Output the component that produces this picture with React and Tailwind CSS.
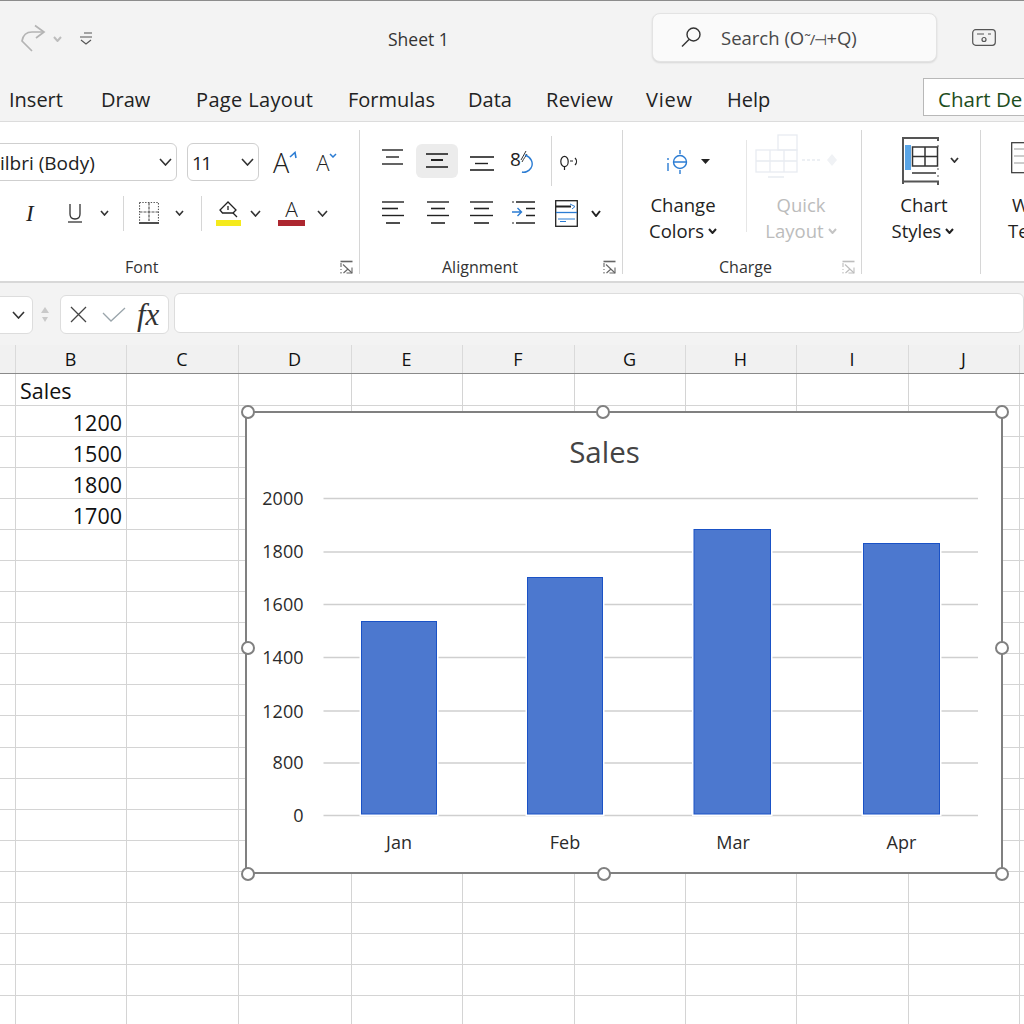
const Chev = ({ w = 10, h = 6, c = "#333", sw = 1.6, className = "" }) => (
  <svg width={w} height={h} viewBox={`0 0 ${w} ${h}`} className={`shrink-0 ${className}`} fill="none" stroke={c} strokeWidth={sw}>
    <path d={`M1 1L${w / 2} ${h - 1}L${w - 1} 1`} />
  </svg>
);

const Lines = ({ w, h = 34, lines, c = "#222" }) => (
  <svg width={w} height={h} viewBox={`0 0 ${w} ${h}`} className="shrink-0" fill="none">
    {lines.map(([x1, x2, y, sw = 1.4, col = c], i) => (
      <line key={i} x1={x1} x2={x2} y1={y} y2={y} stroke={col} strokeWidth={sw} />
    ))}
  </svg>
);

const Launcher = ({ c = "#666", className }) => (
  <svg width="13" height="14" viewBox="0 0 13 14" fill="none" stroke={c} strokeWidth="1.1" className={className}>
    <path d="M0.5 1.5H12.5" strokeWidth="1.6" />
    <path d="M1 3V7M1 9V10M1 12V13.5" />
    <path d="M3 4.5L12 13" />
    <path d="M12 7.5V13H6.5" />
    <path d="M3.5 13L8 9" />
  </svg>
);

const Vr = ({ className = "" }) => <div className={`w-px shrink-0 bg-[#d6d6d6] ${className}`} />;

const Tab = ({ className, children }) => (
  <div className={`flex h-full shrink-0 items-center pt-[6px] text-[20px] text-[#222] ${className}`}>{children}</div>
);

const columns = [
  { w: "w-[16px]", t: "" },
  { w: "w-[111px]", t: "B" },
  { w: "w-[112px]", t: "C" },
  { w: "w-[113px]", t: "D" },
  { w: "w-[111px]", t: "E" },
  { w: "w-[112px]", t: "F" },
  { w: "w-[111px]", t: "G" },
  { w: "w-[111px]", t: "H" },
  { w: "w-[112px]", t: "I" },
  { w: "w-[111px]", t: "J" },
  { w: "w-[24px]", t: "" },
];

const rows = [
  { left: "Sales", h: "h-[32px]" },
  { right: "1200" },
  { right: "1500" },
  { right: "1800" },
  { right: "1700" },
  ...Array.from({ length: 16 }, () => ({})),
];

const gridYs = [
  [498.5, "2000", 505],
  [552, "1800", 558],
  [604.5, "1600", 611],
  [657.5, "1400", 664],
  [711, "1200", 717.5],
  [763, "800", 769],
  [815.5, "0", 822],
];

const bars = [
  { x: 361.5, w: 75, y: 621.5, label: "Jan", cx: 399 },
  { x: 527.5, w: 75, y: 577.5, label: "Feb", cx: 565 },
  { x: 694, w: 76.5, y: 529.5, label: "Mar", cx: 733 },
  { x: 863.5, w: 76, y: 543.5, label: "Apr", cx: 901.5 },
];

const handle = "absolute h-[14px] w-[14px] rounded-full border-2 border-[#808080] bg-white";

export default function App() {
  return (
    <div className="relative h-[1024px] w-[1024px] overflow-hidden bg-white font-['Open_Sans',sans-serif] text-[#222]">
      {/* Title bar */}
      <div className="flex h-[72px] items-center border-t border-[#8c8c8c] bg-[#f3f3f3] pt-[2px]">
        <svg width="26" height="28" viewBox="0 0 26 28" fill="none" stroke="#b4b4b4" strokeWidth="1.7" className="ml-[20px] shrink-0">
          <path d="M15 1.5L24 8L16 14" />
          <path d="M24 8H12C6 8 3 11 2 17L12 27" />
        </svg>
        <Chev w={9} h={6} c="#bdbdbd" sw={2} className="ml-[7px] mt-[2px]" />
        <svg width="14" height="14" viewBox="0 0 14 14" fill="none" stroke="#555" strokeWidth="1.2" className="ml-[17px] shrink-0">
          <path d="M5 2H13M1 6H13M2 9L7 13L12 9" />
        </svg>
        <div className="ml-[295px] w-[264px] shrink-0 pt-[3px] text-[17.5px] text-[#333]">Sheet 1</div>
        <div className="flex h-[49px] w-[285px] shrink-0 items-center rounded-lg border border-[#e3e3e3] bg-[#fafafa] shadow-[0_1px_2px_rgba(0,0,0,0.12)]">
          <svg width="22" height="24" viewBox="0 0 22 24" fill="none" stroke="#333" strokeWidth="1.4" className="ml-[27px] shrink-0">
            <circle cx="13.5" cy="8.5" r="6.5" />
            <path d="M9 13.5L2 20.5" />
          </svg>
          <span className="ml-[19px] whitespace-nowrap text-[18.5px] text-[#484848]">
            Search (O<span className="text-[15px] tracking-[-1px]">˜/⊣</span>+Q)
          </span>
        </div>
        <svg width="24" height="17" viewBox="0 0 24 17" fill="none" stroke="#555" strokeWidth="1.2" className="ml-[35px] shrink-0">
          <rect x="0.7" y="0.7" width="22.6" height="15.6" rx="3" />
          <path d="M5 5H12M16 5H19" />
          <circle cx="12" cy="10.5" r="2" />
        </svg>
      </div>

      {/* Tabs */}
      <div className="flex h-[50px] border-b border-[#dcdcdc] bg-[#f3f3f3]">
        <Tab className="w-[101px] pl-[9px]">Insert</Tab>
        <Tab className="w-[95px]">Draw</Tab>
        <Tab className="w-[152px] tracking-[0.35px]">Page Layout</Tab>
        <Tab className="w-[120px]">Formulas</Tab>
        <Tab className="w-[78px]">Data</Tab>
        <Tab className="w-[100px] tracking-[0.3px]">Review</Tab>
        <Tab className="w-[81px] tracking-[0.8px]">View</Tab>
        <Tab className="w-[196px]">Help</Tab>
        <div className="mt-[6px] flex h-[38px] flex-1 items-center overflow-hidden whitespace-nowrap border border-r-0 border-[#b8b8b8] bg-white pl-[14px] pt-[5px] text-[20.5px] text-[#1d4d1d]">
          Chart De
        </div>
      </div>

      {/* Ribbon */}
      <div className="flex h-[161px] overflow-hidden border-b-2 border-[#d8d8d8] bg-white">
        {/* Font */}
        <div className="relative flex w-[359px] shrink-0 flex-col">
          <div className="mt-[21px] flex h-[38px] items-center">
            <div className="-ml-[30px] flex h-[38px] w-[207px] shrink-0 items-center rounded-md border border-[#cfcfcf] pl-[29px] pt-[3px] text-[19px]">
              <span>ilbri (Body)</span>
              <Chev w={13} h={8} c="#333" className="ml-auto mr-[4px] -mt-[3px]" />
            </div>
            <div className="ml-[10px] flex h-[38px] w-[72px] shrink-0 items-center rounded-md border border-[#cfcfcf] pl-[4px] pt-[2px] text-[19px]">
              <span className="tracking-[-1.5px]">11</span>
              <Chev w={13} h={8} c="#333" className="ml-auto mr-[4px] -mt-[2px]" />
            </div>
            <span className="ml-[14px] text-[27px] font-light leading-none">A</span>
            <svg width="8" height="8" viewBox="0 0 8 8" fill="none" stroke="#2b7cd3" strokeWidth="1.6" className="mb-[14px] shrink-0">
              <path d="M1 6L6 1.5L7 7" />
            </svg>
            <span className="ml-[19px] text-[22px] font-light leading-none">A</span>
            <svg width="8" height="5" viewBox="0 0 8 5" fill="none" stroke="#2b7cd3" strokeWidth="1.5" className="mb-[14px] shrink-0">
              <path d="M1 1L4 4L7 1" />
            </svg>
          </div>
          <div className="mt-[15px] flex h-[34px] items-center">
            <span className="ml-[26px] w-[10px] font-['Liberation_Serif',serif] text-[23px] italic leading-none">I</span>
            <svg width="14" height="20" viewBox="0 0 14 20" fill="none" stroke="#333" strokeWidth="1.3" className="ml-[32px] shrink-0">
              <path d="M2 1V11C2 15 4 16 7 16C10 16 12 15 12 11V1" />
              <path d="M0 19H14" />
            </svg>
            <Chev w={9} h={6} className="ml-[18px]" />
            <Vr className="ml-[14px] h-[35px]" />
            <svg width="20" height="22" viewBox="0 0 20 22" fill="none" stroke="#555" strokeWidth="1.2" className="ml-[15px] shrink-0">
              <path d="M0.5 0.5H19.5V19M0.5 0.5V19" strokeDasharray="1.4 1.4" />
              <path d="M10 0.5V19M0.5 10H19.5" strokeDasharray="3 1" />
              <path d="M0 21H20" stroke="#222" strokeWidth="1.6" />
            </svg>
            <Chev w={9} h={6} className="ml-[16px]" />
            <Vr className="ml-[17px] h-[35px]" />
            <div className="ml-[14px] flex w-[25px] shrink-0 flex-col items-center">
              <svg width="19" height="17" viewBox="0 0 19 17" fill="none" stroke="#222" strokeWidth="1.3">
                <path d="M9 1L1 9L3.5 12H14L17 9L9 1Z" />
                <path d="M9 5V9M14 12L18 16" />
              </svg>
              <div className="mt-[2px] h-[6px] w-[25px] bg-[#f5ea1c]" />
            </div>
            <Chev w={11} h={7} className="ml-[9px]" />
            <div className="ml-[17px] flex w-[27px] shrink-0 flex-col items-center">
              <span className="h-[19px] text-[21px] font-light leading-[19px]">A</span>
              <div className="mt-[1px] h-[6px] w-[27px] bg-[#ad2730]" />
            </div>
            <Chev w={11} h={7} className="ml-[12px]" />
          </div>
          <div className="mb-[4px] mt-auto h-[20px] pl-[125px] text-[16px] leading-[20px] text-[#333]">Font</div>
          <Launcher className="absolute left-[340px] top-[138px]" />
        </div>
        <Vr className="mb-[7px] mt-[8px]" />

        {/* Alignment */}
        <div className="relative flex w-[262px] shrink-0 flex-col">
          <div className="mt-[22px] flex h-[34px] items-center">
            <div className="ml-[22px]">
              <Lines w={22} lines={[[0, 21, 6], [4, 17, 13], [0, 21, 20]]} />
            </div>
            <div className="ml-[12px] flex h-[34px] w-[42px] shrink-0 items-center justify-center rounded-md bg-[#ececec]">
              <Lines w={22} lines={[[0, 22, 10, 1.6], [5, 17, 16, 2], [0, 22, 23, 1.6]]} />
            </div>
            <div className="ml-[12px]">
              <Lines w={24} lines={[[0, 24, 13, 1.6], [5, 18, 19.5], [0, 24, 26, 1.6]]} />
            </div>
            <svg width="24" height="26" viewBox="0 0 24 26" fill="none" className="ml-[16px] mt-[1px] shrink-0">
              <text x="0" y="17" fontSize="19" fill="#222" stroke="none">8</text>
              <path d="M11 11L16 2M12 13C14 9 16 7 17 5" stroke="#333" strokeWidth="1" />
              <path d="M15 6C21 8 24 14 21 19C19 22 15 24 12 23" stroke="#2b7cd3" strokeWidth="1.4" />
            </svg>
            <Vr className="ml-[17px] h-[50px]" />
            <svg width="18" height="16" viewBox="0 0 18 16" fill="none" stroke="#222" strokeWidth="1.2" className="ml-[8px] mt-[4px] shrink-0">
              <ellipse cx="4.5" cy="6.5" rx="3.7" ry="5.2" />
              <path d="M4.5 12V15M10 6H13M15 3C17 5 17 8 15 10" />
            </svg>
          </div>
          <div className="mt-[18px] flex h-[34px] items-center">
            <div className="ml-[22px]">
              <Lines w={22} lines={[[0, 22, 6], [0, 16, 12.5, 1.6], [0, 22, 19.5], [4, 18, 27, 1.6]]} />
            </div>
            <div className="ml-[23px]">
              <Lines w={22} lines={[[0, 22, 6], [4, 18, 12.5, 1.6], [0, 22, 19.5], [4, 18, 27, 1.6]]} />
            </div>
            <div className="ml-[21px]">
              <Lines w={23} lines={[[0, 23, 6], [4, 19, 12.5, 1.6], [0, 23, 19.5], [4, 19, 27, 1.6]]} />
            </div>
            <svg width="23" height="34" viewBox="0 0 23 34" fill="none" stroke="#222" strokeWidth="1.4" className="ml-[19px] shrink-0">
              <path d="M4 6H23M14 12.5H23M14 19.5H23M4 27H23" />
              <path d="M0 6H2M0 27H2" strokeWidth="1" />
              <path d="M0 16H9M5.5 12L9.5 16L5.5 20" stroke="#2b7cd3" />
            </svg>
            <svg width="23" height="27" viewBox="0 0 23 27" fill="none" stroke="#222" strokeWidth="1.3" className="ml-[20px] shrink-0">
              <rect x="0.7" y="0.7" width="21.6" height="25.6" />
              <path d="M1 6.5H16" strokeWidth="2" />
              <path d="M1 12.5H22" stroke="#2b7cd3" />
              <path d="M15 4L20 6.5L17 9" stroke="#2b7cd3" strokeWidth="1" />
              <path d="M3 19H20M5 21.5H11" stroke="#2b7cd3" strokeWidth="1" />
            </svg>
            <Chev w={10} h={7} c="#222" sw={2} className="ml-[13px]" />
          </div>
          <div className="mb-[4px] mt-auto h-[20px] pl-[82px] text-[16px] leading-[20px] text-[#333]">Alignment</div>
          <Launcher className="absolute left-[243px] top-[138px]" />
        </div>
        <Vr className="mb-[7px] mt-[8px]" />

        {/* Charge */}
        <div className="relative flex w-[238px] shrink-0 flex-col">
          <div className="mt-[9px] flex">
            <div className="flex w-[120px] shrink-0 flex-col items-center">
              <div className="flex h-[60px] items-center pl-[10px]">
                <svg width="22" height="26" viewBox="0 0 22 26" fill="none" stroke="#2b7cd3" strokeWidth="1.4" className="mt-[2px]">
                  <circle cx="14" cy="13" r="6.5" />
                  <path d="M8 13H20.5M14 1V5M14 21V25M2 9V11M2 14V22" />
                </svg>
                <svg width="9" height="5" viewBox="0 0 9 5" className="ml-[13px]">
                  <path d="M0 0H9L4.5 5Z" fill="#222" />
                </svg>
              </div>
              <div className="mt-[1px] text-center text-[18.5px] leading-[26px]">
                <div>Change</div>
                <div className="flex items-center justify-center gap-[4px]">
                  Colors <Chev w={9} h={6} c="#222" sw={2} />
                </div>
              </div>
            </div>
            <Vr className="ml-[3px] mt-[9px] h-[92px] bg-[#e6e6e6]" />
            <div className="flex w-[108px] shrink-0 flex-col items-center">
              <svg width="100" height="60" viewBox="0 0 100 60" fill="none" stroke="#e8ecf1" strokeWidth="1.3" className="mr-[6px] shrink-0">
                <rect x="30" y="4" width="19" height="15" />
                <rect x="8" y="19" width="41" height="22" />
                <path d="M8 30H49M22 19V41M36 19V41M20 46H36" />
                <path d="M54 29H72" strokeDasharray="3 2" />
                <path d="M84 23L89 29L84 35L79 29Z" fill="#f0f2f5" stroke="none" />
              </svg>
              <div className="mt-[1px] text-center text-[18.5px] leading-[26px] text-[#bcbcbc]">
                <div>Quick</div>
                <div className="flex items-center justify-center gap-[4px]">
                  Layout <Chev w={9} h={6} c="#c4c4c4" sw={2} />
                </div>
              </div>
            </div>
          </div>
          <div className="mb-[4px] mt-auto h-[20px] pl-[96px] text-[16px] leading-[20px] text-[#333]">Charge</div>
          <Launcher c="#bdbdbd" className="absolute left-[219px] top-[138px]" />
        </div>
        <Vr className="mb-[7px] mt-[8px]" />

        {/* Chart styles */}
        <div className="flex w-[118px] shrink-0 flex-col items-center">
          <div className="mt-[15px] flex h-[48px] items-center pl-[18px]">
            <svg width="37" height="48" viewBox="0 0 37 48" fill="none" stroke="#555" strokeWidth="1.5" className="shrink-0">
              <path d="M1 47V1H36V4" strokeWidth="2" />
              <rect x="3" y="8" width="6" height="25" fill="#5aa5e6" stroke="none" />
              <rect x="10.5" y="10" width="25" height="19" stroke="#333" />
              <path d="M23 10V29M10.5 19.5H35.5" stroke="#333" />
              <path d="M10 36H34" stroke="#333" />
              <path d="M1 44.5H36V48" strokeWidth="2" />
              <path d="M36 8V10M36 31V33M36 38V40" strokeWidth="1" />
            </svg>
            <Chev w={9} h={6} c="#333" sw={1.8} className="ml-[11px] -mt-[2px]" />
          </div>
          <div className="mt-[7px] pl-[4px] text-center text-[18.5px] leading-[26px]">
            <div className="pl-[2px]">Chart</div>
            <div className="flex items-center justify-center gap-[4px]">
              Styles <Chev w={9} h={6} c="#222" sw={2} />
            </div>
          </div>
        </div>
        <Vr className="mb-[7px] mt-[8px]" />

        {/* Clipped group */}
        <div className="flex w-[60px] shrink-0 flex-col pl-[27px]">
          <svg width="40" height="32" viewBox="0 0 40 32" fill="none" stroke="#333" strokeWidth="1.2" className="mt-[20px] ml-[3px] shrink-0">
            <rect x="0.7" y="0.7" width="30" height="30" />
            <path d="M3 7H28M3 14H28M3 21H28" stroke="#999" />
          </svg>
          <div className="mt-[18px] whitespace-nowrap text-[18.5px] leading-[26px]">
            <div className="pl-[4px]">W</div>
            <div>Te</div>
          </div>
        </div>
      </div>

      {/* Formula bar */}
      <div className="flex h-[62px] items-start bg-[#f3f3f3]">
        <div className="-ml-[8px] mt-[13px] flex h-[38px] w-[41px] shrink-0 items-center justify-end rounded-md border border-[#dddddd] bg-white pr-[7px]">
          <Chev w={13} h={8} c="#333" />
        </div>
        <svg width="8" height="16" viewBox="0 0 8 16" className="ml-[8px] mt-[24px] shrink-0" fill="#c9c9c9">
          <path d="M4 0L8 6H0Z" />
          <path d="M4 15L1 10H7Z" />
        </svg>
        <div className="ml-[11px] mt-[12px] flex h-[39px] w-[109px] shrink-0 items-center rounded-md border border-[#dddddd] bg-white">
          <svg width="17" height="17" viewBox="0 0 17 17" fill="none" stroke="#444" strokeWidth="1.3" className="ml-[9px] shrink-0">
            <path d="M1 1L16 16M16 1L1 16" />
          </svg>
          <svg width="24" height="15" viewBox="0 0 24 15" fill="none" stroke="#9aa5ab" strokeWidth="1.3" className="ml-[15px] shrink-0">
            <path d="M1 6L9 14L23 1" />
          </svg>
          <span className="ml-[11px] font-['Liberation_Serif',serif] text-[31px] italic leading-none text-[#333]">fx</span>
        </div>
        <div className="ml-[5px] mt-[10px] h-[40px] flex-1 rounded-md border border-[#dddddd] bg-white" />
      </div>

      {/* Column headers */}
      <div className="flex h-[29px] border-b border-[#8a8a8a] bg-[#f1f1f1]">
        {columns.map((col, i) => (
          <div key={i} className={`${col.w} flex shrink-0 items-center justify-center border-r border-[#dadada] pr-[1px] text-[18px] text-[#111]`}>
            {col.t}
          </div>
        ))}
      </div>

      {/* Sheet */}
      <div>
        {rows.map((row, r) => (
          <div key={r} className={`flex ${row.h || "h-[31.05px]"} border-b border-[#d4d4d4]`}>
            {columns.map((col, i) => (
              <div key={i} className={`${col.w} flex shrink-0 items-center border-r border-[#d4d4d4] text-[21.5px] leading-none text-[#111] ${r === 0 ? "pt-[3px]" : "pt-[4px]"} ${i === 1 && row.right ? "justify-end pr-[4px]" : "pl-[4px]"}`}>
                {i === 1 ? row.left || row.right || "" : ""}
              </div>
            ))}
          </div>
        ))}
      </div>

      {/* Chart object over the sheet */}
      <div className="absolute left-[245px] top-[411px] h-[463px] w-[758px] border-2 border-[#808080] bg-white">
        <svg width="754" height="459" viewBox="247 413 754 459" className="block">
          <text x="604.5" y="463" textAnchor="middle" fontSize="29.5" fontWeight="500" fill="#444">Sales</text>
          {gridYs.map(([y, label, base]) => (
            <g key={label}>
              <line x1="323.5" x2="978" y1={y} y2={y} stroke="#cfcfcf" strokeWidth="1.4" />
              <text x="303.5" y={base} textAnchor="end" fontSize="18" fill="#2b2b2b">{label}</text>
            </g>
          ))}
          {bars.map((b) => (
            <g key={b.label}>
              <rect x={b.x - 2} y={b.y - 2} width={b.w + 4} height={814 - b.y + 4} fill="#fff" />
              <rect x={b.x} y={b.y} width={b.w} height={814 - b.y} fill="#4c78cf" stroke="#1a52c6" strokeWidth="1" />
              <text x={b.cx} y="849" textAnchor="middle" fontSize="18" fill="#2b2b2b">{b.label}</text>
            </g>
          ))}
        </svg>
      </div>
      <div className={`${handle} left-[241px] top-[405px]`} />
      <div className={`${handle} left-[596px] top-[405px]`} />
      <div className={`${handle} left-[995px] top-[405px]`} />
      <div className={`${handle} left-[241px] top-[641px]`} />
      <div className={`${handle} left-[995px] top-[641px]`} />
      <div className={`${handle} left-[241px] top-[867px]`} />
      <div className={`${handle} left-[597px] top-[867px]`} />
      <div className={`${handle} left-[995px] top-[867px]`} />
    </div>
  );
}
